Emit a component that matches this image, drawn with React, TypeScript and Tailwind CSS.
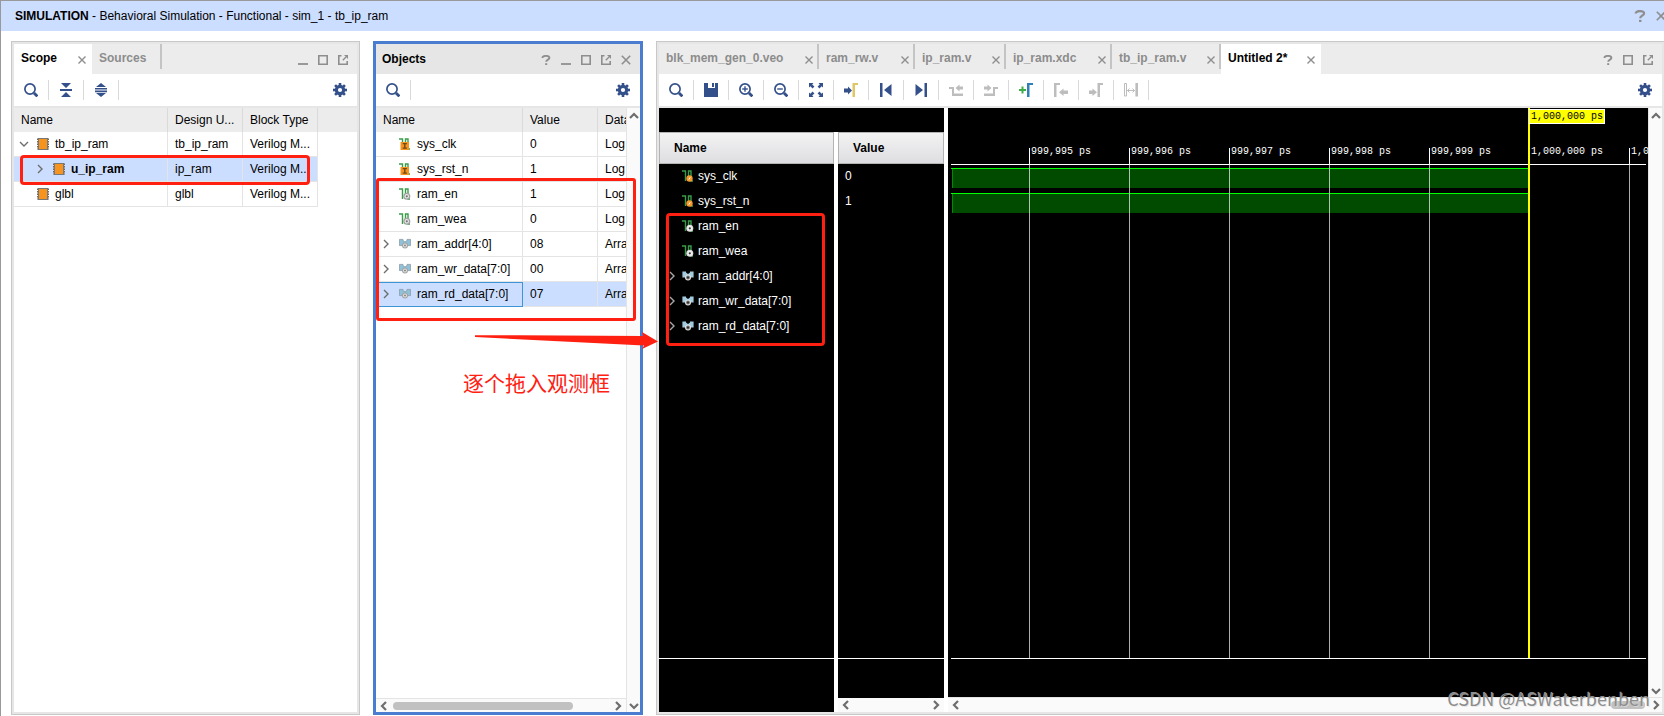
import React from "react";
import clsx from "clsx";

type IconProps = { className?: string };

/* ---------- window control icons ---------- */

const CloseIcon: React.FC<IconProps> = ({ className }) => (
  <svg width="10" height="10" viewBox="0 0 10 10" className={className} fill="none" stroke="#8e8e8e" strokeWidth="1.6">
    <path d="M.8.8l8.4 8.4M9.2.8L.8 9.2" />
  </svg>
);

const TabCloseIcon: React.FC = () => (
  <svg width="8" height="8" viewBox="0 0 8 8" fill="none" stroke="#8e8e8e" strokeWidth="1.4">
    <path d="M.5.5l7 7M7.5.5l-7 7" />
  </svg>
);

const MinIcon: React.FC = () => (
  <svg width="10" height="10" viewBox="0 0 10 10">
    <path fill="#999" d="M0 8h10v2H0z" />
  </svg>
);

const MaxIcon: React.FC = () => (
  <svg width="10" height="10" viewBox="0 0 10 10" fill="none" stroke="#8e8e8e" strokeWidth="1.6">
    <path d="M.8.8h8.4v8.4H.8z" />
  </svg>
);

const PopOutIcon: React.FC = () => (
  <svg width="10" height="10" viewBox="0 0 10 10" fill="none" stroke="#8e8e8e" strokeWidth="1.6">
    <path d="M3.500.8H.8v8.4h8.4V6" />
    <path d="M4.800 5.200L8 2" strokeWidth="1.3" />
    <path d="M6 0h4v4z" fill="#8e8e8e" stroke="none" />
  </svg>
);

const HelpIcon: React.FC<{ size?: number }> = ({ size = 10 }) => (
  <svg width={size} height={size} viewBox="0 0 10 10" fill="none" stroke="#8e8e8e" strokeWidth="1.9">
    <path d="M1.400 3C1.400 1.500 3 .9 4.800.9s3.600.6 3.600 2.100c0 1.700-3.200 1.600-3.200 3.800" />
    <path d="M4.200 8.200h2V10h-2z" fill="#8e8e8e" stroke="none" />
  </svg>
);

/* ---------- toolbar icons ---------- */

const SearchIcon: React.FC<{ sign?: "plus" | "minus" }> = ({ sign }) => (
  <svg width="14" height="14" viewBox="0 0 14 14" fill="none" stroke="#34508a" strokeWidth="1.7">
    <circle cx="6" cy="6" r="5.1" />
    <path d="M10 10l3.400 3.400" strokeWidth="2.8" />
    {sign && <path d="M3.200 6h5.600" strokeWidth="1.4" />}
    {sign === "plus" && <path d="M6 3.200v5.600" strokeWidth="1.4" />}
  </svg>
);

const GearIcon: React.FC = () => (
  <svg width="14" height="14" viewBox="0 0 14 14">
    <g fill="#34508a">
      <path d="M5.700 0h2.600v14H5.700z" />
      <path d="M0 5.700h14v2.600H0z" />
      <path d="M5.700 0h2.600v14H5.700z" transform="rotate(45 7 7)" />
      <path d="M5.700 0h2.600v14H5.700z" transform="rotate(-45 7 7)" />
      <circle cx="7" cy="7" r="5.2" />
    </g>
    <circle cx="7" cy="7" r="2.1" fill="#fff" />
  </svg>
);

const CollapseIcon: React.FC = () => (
  <svg width="12" height="14" viewBox="0 0 12 14" fill="#34508a">
    <path d="M1 0h10L6 5zM1 14h10L6 9zM0 6h12v2H0z" />
  </svg>
);

const ExpandIcon: React.FC = () => (
  <svg width="12" height="14" viewBox="0 0 12 14" fill="#34508a">
    <path d="M6 0l5 4H1zM6 14l5-4H1zM0 5h12v1.600H0zM0 7.600h12v1.600H0z" />
  </svg>
);

const SaveIcon: React.FC = () => (
  <svg width="14" height="14" viewBox="0 0 14 14" fill="#34508a">
    <path d="M0 0h4v5h7V0h3v14H0z" />
    <path d="M8 0h2v4H8z" />
  </svg>
);

const FitIcon: React.FC = () => (
  <svg width="14" height="14" viewBox="0 0 14 14" fill="#34508a">
    <path d="M0 0h4.500L3.200 1.400 5.400 3.600 3.600 5.400 1.400 3.200 0 4.500zM14 0v4.500l-1.400-1.300-2.200 2.200-1.800-1.800 2.200-2.200L9.500 0zM0 14V9.500l1.400 1.300 2.200-2.200 1.800 1.800-2.200 2.200L4.500 14zM14 14H9.500l1.300-1.400-2.200-2.200 1.800-1.800 2.200 2.200L14 9.500z" />
  </svg>
);

const CursorIcon: React.FC = () => (
  <svg width="14" height="14" viewBox="0 0 14 14">
    <path fill="#34508a" d="M0 5.500h4V3.500l4 4-4 4v-2H0z" />
    <path fill="#e0c667" d="M8.500 0H14v2h-3v12H8.500z" />
  </svg>
);

const FirstIcon: React.FC = () => (
  <svg width="14" height="14" viewBox="0 0 14 14" fill="#34508a">
    <path d="M1 0h2.500v14H1zM12.500 1v12L5 7z" />
  </svg>
);

const LastIcon: React.FC = () => (
  <svg width="14" height="14" viewBox="0 0 14 14" fill="#34508a">
    <path d="M10.500 0H13v14h-2.500zM1.500 1v12L9 7z" />
  </svg>
);

const PrevEdgeIcon: React.FC = () => (
  <svg width="14" height="14" viewBox="0 0 14 14" fill="#bdbdbd">
    <path d="M0 4h5v6.500h9V13H3V6H0zM14 3.500v3h-3.500v2L6.500 5l4-3.500v2z" />
  </svg>
);

const NextEdgeIcon: React.FC = () => (
  <svg width="14" height="14" viewBox="0 0 14 14" fill="#bdbdbd">
    <path d="M0 10.500h9V4h5v2h-3v7H0zM0 3.500h3.500v-2l4 3.500-4 3.500v-2H0z" />
  </svg>
);

const AddMarkerIcon: React.FC = () => (
  <svg width="14" height="14" viewBox="0 0 14 14">
    <path fill="#3fae49" d="M2.500 3.500h2V6H7v2H4.500v2.500h-2V8H0V6h2.500z" />
    <path fill="#2f7fb8" d="M8 0h6v2h-3.500v12H8z" />
  </svg>
);

const PrevMarkerIcon: React.FC = () => (
  <svg width="14" height="14" viewBox="0 0 14 14" fill="#bdbdbd">
    <path d="M0 0h6v2H2.500v12H0zM14 7.500v3.500H9.500v2L5 9.200l4.500-3.800v2.100z" />
  </svg>
);

const NextMarkerIcon: React.FC = () => (
  <svg width="14" height="14" viewBox="0 0 14 14" fill="#bdbdbd">
    <path d="M8.500 0H14v2h-3v12H8.500zM0 7.500h3.500V5.500L8 9.300l-4.500 3.800V11H0z" />
  </svg>
);

const SwapIcon: React.FC = () => (
  <svg width="14" height="14" viewBox="0 0 14 14" fill="none" stroke="#bdbdbd">
    <path d="M.5.500h2v12.500h-2zM3.500 7.500h7M5.500 5.500l-2 2 2 2M8.500 5.500l2 2-2 2" />
    <path d="M12.700 0v13.500" strokeWidth="2.600" />
  </svg>
);

/* ---------- tree and signal icons ---------- */

const Chevron: React.FC<{ dir: "up" | "down" | "left" | "right"; bold?: boolean; color?: string }> = ({
  dir,
  bold,
  color = "#6e6e6e",
}) => {
  const d = {
    up: "M1 7l4-4 4 4",
    down: "M1 3l4 4 4-4",
    left: "M7 1L3 5l4 4",
    right: "M3 1l4 4-4 4",
  }[dir];
  return (
    <svg width="10" height="10" viewBox="0 0 10 10" fill="none" stroke={color} strokeWidth={bold ? 2.2 : 1.4} className="shrink-0">
      <path d={d} />
    </svg>
  );
};

const ChipIcon: React.FC = () => (
  <svg width="12" height="12" viewBox="0 0 12 12" className="shrink-0">
    <path stroke="#666" strokeWidth="12" strokeDasharray="1.500 1" d="M6 .5v11" />
    <path fill="#777" d="M1 0h10v12H1z" />
    <path fill="#f7941d" d="M2 1h8v10H2z" />
  </svg>
);

type SignalKind = "port" | "net" | "bus";

const SignalIcon: React.FC<{ kind: SignalKind; dark?: boolean }> = ({ kind, dark }) => {
  if (kind === "bus") {
    return (
      <svg width="12" height="12" viewBox="0 0 12 12" className="shrink-0">
        <path
          fill={dark ? "#a3cbe0" : "#8fc1d8"}
          stroke={dark ? "none" : "#8c9ba3"}
          strokeWidth=".8"
          d="M.4 1.400H4v1.200L6 4l2-1.400V1.400h3.600v6.200H9L6 5.500 3 7.600H.4z"
        />
        <circle cx="6" cy="7.500" r="3" fill={dark ? "#e2e2e2" : "#a2a2a2"} />
        <circle cx="6" cy="7.500" r="1.900" fill={dark ? "#777" : "#e8e8e8"} />
        <circle cx="6" cy="7.500" r=".9" fill={dark ? "#222" : "#777"} />
      </svg>
    );
  }
  return (
    <svg width="12" height="12" viewBox="0 0 12 12" className="shrink-0">
      <path d="M0 1h3.500v10M6.500 8V1H9v10h2" fill="none" stroke="#3a9c4b" strokeWidth="1.400" />
      {kind === "port" && !dark && (
        <>
          <path fill="#f7941d" d="M1.500 4H10v8H1.500z" />
          <path fill="#6d4a1a" d="M3.700 5h4.200v1.200H6.500v3.400h1.400v1.200H3.700V9.600h1.400V6.200H3.700z" />
        </>
      )}
      {kind === "port" && dark && (
        <>
          <circle cx="7.500" cy="8.500" r="3.200" fill="#f79a2d" />
          <path d="M6.800 9.500l1.500-2.200" stroke="#fff" />
        </>
      )}
      {kind === "net" && (
        <>
          <circle cx="7.800" cy="8.300" r="3.500" fill={dark ? "#dedede" : "#a2a2a2"} />
          <circle cx="7.800" cy="8.300" r="2.200" fill={dark ? "#f4f4f4" : "#e8e8e8"} />
          <circle cx="7.800" cy="8.300" r="1.100" fill={dark ? "#333" : "#777"} />
        </>
      )}
    </svg>
  );
};

/* ---------- shared pieces ---------- */

const WindowButton: React.FC<{ label: string; children: React.ReactNode }> = ({ label, children }) => (
  <button type="button" aria-label={label} className="flex size-[10px] shrink-0 items-center justify-center">
    {children}
  </button>
);

const Tool: React.FC<{ label: string; children: React.ReactNode }> = ({ label, children }) => (
  <button
    type="button"
    aria-label={label}
    className="flex h-5 w-[35px] shrink-0 items-center justify-center border-r border-[#d9d9d9]"
  >
    {children}
  </button>
);

const Toolbar: React.FC<{ children: React.ReactNode }> = ({ children }) => (
  <div className="flex h-[34px] shrink-0 items-center border-b-2 border-[#e6e6e6] bg-white">
    {children}
    <button type="button" aria-label="Settings" className="mr-[10px] ml-auto">
      <GearIcon />
    </button>
  </div>
);

const Tab: React.FC<{ title: string; active?: boolean; closable?: boolean; width: string }> = ({
  title,
  active,
  closable = true,
  width,
}) => (
  <div
    className={clsx(
      "flex shrink-0 items-start justify-between font-bold",
      width,
      active ? "h-[30px] bg-white pr-[6px] text-black" : "h-[25px] border-r-2 border-[#c4c4c4] pr-1 text-[#8c8c8c]"
    )}
  >
    <button type="button" className="pt-[6px] pl-[7px] leading-4">
      {title}
    </button>
    {closable && (
      <button type="button" aria-label={`Close ${title}`} className="pt-3">
        <TabCloseIcon />
      </button>
    )}
  </div>
);

const scopeRows = [
  { name: "tb_ip_ram", unit: "tb_ip_ram", depth: 0, arrow: "down" as const },
  { name: "u_ip_ram", unit: "ip_ram", depth: 1, arrow: "right" as const, selected: true },
  { name: "glbl", unit: "glbl", depth: 0 },
];

const signals: { name: string; value: string; type: string; kind: SignalKind }[] = [
  { name: "sys_clk", value: "0", type: "Log", kind: "port" },
  { name: "sys_rst_n", value: "1", type: "Log", kind: "port" },
  { name: "ram_en", value: "1", type: "Log", kind: "net" },
  { name: "ram_wea", value: "0", type: "Log", kind: "net" },
  { name: "ram_addr[4:0]", value: "08", type: "Arra", kind: "bus" },
  { name: "ram_wr_data[7:0]", value: "00", type: "Arra", kind: "bus" },
  { name: "ram_rd_data[7:0]", value: "07", type: "Arra", kind: "bus" },
];

const th = "h-6 border-r border-[#dadada] bg-[#ececec] pl-[7px] text-left font-normal whitespace-nowrap";
const td = "h-[25px] border-r border-b border-[#e4e4e4] whitespace-nowrap";

/* ---------- panels ---------- */

const ScopePanel: React.FC = () => (
  <section className="relative flex w-[349px] shrink-0 flex-col border border-[#c8c8c8] bg-white">
    <div className="flex flex-1 flex-col border-2 border-[#e6e6e6]">
      <div className="flex h-[30px] shrink-0 bg-[#ececec]">
        <Tab title="Scope" active width="w-[78px]" />
        <Tab title="Sources" closable={false} width="w-[70px]" />
        <div className="mr-[9px] ml-auto flex items-center gap-[10px] pt-px">
          <WindowButton label="Minimize"><MinIcon /></WindowButton>
          <WindowButton label="Maximize"><MaxIcon /></WindowButton>
          <WindowButton label="Float"><PopOutIcon /></WindowButton>
        </div>
      </div>
      <Toolbar>
        <Tool label="Search"><SearchIcon /></Tool>
        <Tool label="Collapse all"><CollapseIcon /></Tool>
        <Tool label="Expand all"><ExpandIcon /></Tool>
      </Toolbar>
      <div className="bg-[linear-gradient(#ececec_24px,transparent_24px)]">
        <table className="w-[304px] table-fixed border-separate border-spacing-0">
          <thead>
            <tr>
              <th className={clsx(th, "w-[154px]")}>Name</th>
              <th className={clsx(th, "w-[75px]")}>Design U...</th>
              <th className={clsx(th, "w-[75px]")}>Block Type</th>
            </tr>
          </thead>
          <tbody>
            {scopeRows.map(({ name, unit, depth, arrow, selected }) => (
              <tr key={name} className={clsx(selected && "bg-[#ccdeff]")}>
                <td className={clsx(td, "pl-[5px]")}>
                  <div className={clsx("flex items-center", depth > 0 && "pl-4", selected && "font-bold")}>
                    {arrow ? <Chevron dir={arrow} /> : <span className="w-[10px]" />}
                    <span className="mr-[6px] ml-2"><ChipIcon /></span>
                    {name}
                  </div>
                </td>
                <td className={clsx(td, "pl-[7px]")}>{unit}</td>
                <td className={clsx(td, "pl-[7px]")}>Verilog M...</td>
              </tr>
            ))}
          </tbody>
        </table>
      </div>
    </div>
    {/* highlight around the selected instance */}
    <div className="absolute top-[113px] left-2 h-[30px] w-[290px] rounded-[4px] border-3 border-[#ff2012]" />
  </section>
);

const ObjectsPanel: React.FC = () => (
  <section className="relative flex w-[270px] shrink-0 flex-col border-3 border-[#4a7dcf] bg-white">
    <div className="flex h-[30px] shrink-0 items-center bg-[#e6e6e6] pl-[6px]">
      <h2 className="pb-px font-bold">Objects</h2>
      <div className="mr-[9px] ml-auto flex items-center gap-[10px] pt-px">
        <WindowButton label="Help"><HelpIcon /></WindowButton>
        <WindowButton label="Minimize"><MinIcon /></WindowButton>
        <WindowButton label="Maximize"><MaxIcon /></WindowButton>
        <WindowButton label="Float"><PopOutIcon /></WindowButton>
        <WindowButton label="Close"><CloseIcon /></WindowButton>
      </div>
    </div>
    <Toolbar>
      <Tool label="Search"><SearchIcon /></Tool>
    </Toolbar>
    <div className="flex flex-1">
      <div className="flex min-w-0 flex-1 flex-col">
        <table className="w-full table-fixed border-separate border-spacing-0">
          <thead>
            <tr>
              <th className={clsx(th, "w-[147px]")}>Name</th>
              <th className={clsx(th, "w-[75px]")}>Value</th>
              <th className={clsx(th, "overflow-hidden border-r-0")}>Data</th>
            </tr>
          </thead>
          <tbody>
            {signals.map(({ name, value, type, kind }, i) => {
              const selected = i === signals.length - 1;
              return (
                <tr key={name} className={clsx(selected && "bg-[#ccdeff]")}>
                  <td className={clsx(td, "pl-[5px]", selected && "outline -outline-offset-1 outline-[#3d95d6]")}>
                    <div className="flex items-center">
                      {kind === "bus" ? <Chevron dir="right" /> : <span className="w-[10px]" />}
                      <span className="mr-[6px] ml-2"><SignalIcon kind={kind} /></span>
                      {name}
                    </div>
                  </td>
                  <td className={clsx(td, "pl-[7px]")}>{value}</td>
                  <td className={clsx(td, "border-r-0 pl-[7px]")}>{type}</td>
                </tr>
              );
            })}
          </tbody>
        </table>
        <div className="mt-auto flex h-[14px] items-center border-t border-[#e4e4e4] bg-[#fafafa] px-[3px]">
          <Chevron dir="left" bold />
          <div className="ml-1 h-2 w-[180px] rounded-full bg-[#c1c1c1]" />
          <span className="ml-auto flex"><Chevron dir="right" bold /></span>
        </div>
      </div>
      <div className="flex w-[14px] shrink-0 flex-col items-center justify-between border-l border-[#e4e4e4] bg-[#fafafa] pt-[3px] pb-px">
        <Chevron dir="up" bold />
        <Chevron dir="down" bold />
      </div>
    </div>
    {/* highlight around the internal signals */}
    <div className="absolute top-[134px] left-0 h-[143px] w-[260px] rounded-[3px] border-3 border-[#ff2012]" />
    <svg width="184" height="18" viewBox="0 0 184 18" className="absolute top-[288px] left-[98px] z-10">
      <path fill="#ff2012" d="M1 3.200h43L169 4l-1-4 16 9.500L168 17l2-3.500L1 5z" />
    </svg>
    <p className="absolute top-[322px] left-[87px] font-['Noto_Sans_CJK_SC',sans-serif] text-[21px] leading-8 whitespace-nowrap text-[#ff2012]">
      逐个拖入观测框
    </p>
  </section>
);

const waveTabs = [
  { title: "blk_mem_gen_0.veo", width: "w-[160px]" },
  { title: "ram_rw.v", width: "w-[96px]" },
  { title: "ip_ram.v", width: "w-[91px]" },
  { title: "ip_ram.xdc", width: "w-[106px]" },
  { title: "tb_ip_ram.v", width: "w-[109px]" },
];

const waveTools = [
  { label: "Search", icon: <SearchIcon /> },
  { label: "Save", icon: <SaveIcon /> },
  { label: "Zoom in", icon: <SearchIcon sign="plus" /> },
  { label: "Zoom out", icon: <SearchIcon sign="minus" /> },
  { label: "Zoom fit", icon: <FitIcon /> },
  { label: "Go to cursor", icon: <CursorIcon /> },
  { label: "Go to start", icon: <FirstIcon /> },
  { label: "Go to end", icon: <LastIcon /> },
  { label: "Previous transition", icon: <PrevEdgeIcon /> },
  { label: "Next transition", icon: <NextEdgeIcon /> },
  { label: "Add marker", icon: <AddMarkerIcon /> },
  { label: "Previous marker", icon: <PrevMarkerIcon /> },
  { label: "Next marker", icon: <NextMarkerIcon /> },
  { label: "Swap cursors", icon: <SwapIcon /> },
];

const ticks = [
  { x: 81, label: "999,995 ps" },
  { x: 181, label: "999,996 ps" },
  { x: 281, label: "999,997 ps" },
  { x: 381, label: "999,998 ps" },
  { x: 481, label: "999,999 ps" },
  { x: 581, label: "1,000,000 ps" },
  { x: 681, label: "1,0" },
];

const waveHeader =
  "flex h-8 shrink-0 items-center border border-[#b4b4b4] bg-linear-to-b from-[#f3f3f3] to-[#dedee2] pl-[14px] font-bold";

const Waveform: React.FC = () => (
  <svg width="100%" height="100%" className="absolute inset-0" shapeRendering="crispEdges">
    {[60, 85].map((y) => (
      <g key={y}>
        <rect x="4" y={y} width="576" height="20" fill="#004b00" />
        <rect x="4" y={y} width="1" height="20" fill="#008a00" />
        <rect x="3" y={y} width="577" height="1" fill="#00ff00" />
      </g>
    ))}
    {ticks.map(({ x, label }) => (
      <g key={x}>
        <rect x={x} y="57" width="1" height="100%" fill="#fff" opacity=".68" />
        <rect x={x} y="40" width="1" height="17" fill="#fff" />
        <text x={x + 2} y="46" fill="#fff" className="font-['Liberation_Mono',monospace] text-[10px]">
          {label}
        </text>
      </g>
    ))}
    <rect x="3" y="56" width="695" height="1" fill="#fff" />
    {/* main cursor */}
    <rect x="580" y="0" width="2" height="100%" fill="#ff0" />
    <rect x="581" y="1" width="75" height="14" fill="#ff0" stroke="#fff" />
    <text x="583" y="11" fill="#000" className="font-['Liberation_Mono',monospace] text-[10px]">
      1,000,000 ps
    </text>
  </svg>
);

const WavePanel: React.FC = () => (
  <section className="relative flex min-w-0 flex-1 flex-col border border-r-0 border-[#c8c8c8] bg-white">
    <div className="flex flex-1 flex-col border-2 border-[#e6e6e6]">
      <div className="flex h-[30px] shrink-0 bg-[#ececec]">
        {waveTabs.map((tab) => (
          <Tab key={tab.title} {...tab} />
        ))}
        <Tab title="Untitled 2*" active width="w-[100px]" />
        <div className="mr-[9px] ml-auto flex items-center gap-[10px] pt-px">
          <WindowButton label="Help"><HelpIcon /></WindowButton>
          <WindowButton label="Maximize"><MaxIcon /></WindowButton>
          <WindowButton label="Float"><PopOutIcon /></WindowButton>
        </div>
      </div>
      <Toolbar>
        {waveTools.map(({ label, icon }) => (
          <Tool key={label} label={label}>{icon}</Tool>
        ))}
      </Toolbar>
      <div className="flex flex-1">
        {/* names and values */}
        <div className="flex w-[285px] shrink-0 flex-col">
          <div className="h-6 bg-black" />
          <div className="flex flex-1 gap-1 text-white">
            <div className="flex w-[175px] flex-col bg-black">
              <div className={clsx(waveHeader, "text-black")}>Name</div>
              <ul className="flex-1 border-b border-white">
                {signals.map(({ name, kind }) => (
                  <li key={name} className="flex h-[25px] items-center pb-px pl-2">
                    {kind === "bus" ? <Chevron dir="right" color="#a8a8a8" /> : <span className="w-[10px]" />}
                    <span className="mr-1 ml-[5px]"><SignalIcon kind={kind} dark /></span>
                    {name}
                  </li>
                ))}
              </ul>
              <div className="h-[53px]" />
            </div>
            <div className="flex flex-1 flex-col bg-black">
              <div className={clsx(waveHeader, "text-black")}>Value</div>
              <ul className="flex-1 border-b border-white">
                {signals.slice(0, 2).map(({ name, value }) => (
                  <li key={name} className="flex h-[25px] items-center pb-px pl-[7px]">{value}</li>
                ))}
              </ul>
              <div className="h-[39px]" />
              <div className="flex h-[14px] items-center justify-between bg-[#fafafa] px-[3px]">
                <Chevron dir="left" bold />
                <Chevron dir="right" bold />
              </div>
            </div>
          </div>
        </div>
        {/* waveform canvas */}
        <div className="ml-1 flex min-w-0 flex-1 flex-col">
          <div className="flex flex-1">
            <div className="flex min-w-0 flex-1 flex-col bg-black">
              <div className="relative flex-1 overflow-hidden">
                <Waveform />
              </div>
              <div className="mr-[2px] ml-[3px] h-[39px] border-t border-white" />
            </div>
            <div className="flex w-[14px] shrink-0 flex-col items-center justify-between border-l border-[#e4e4e4] bg-[#fafafa] pt-[3px] pb-px">
              <Chevron dir="up" bold />
              <Chevron dir="down" bold />
            </div>
          </div>
          <div className="flex h-[15px] items-center border-t border-[#e4e4e4] bg-[#fafafa] pr-px pl-[3px]">
            <Chevron dir="left" bold />
            <div className="mr-[6px] ml-auto h-2 w-[34px] rounded-full bg-[#c1c1c1]" />
            <Chevron dir="right" bold />
          </div>
        </div>
      </div>
    </div>
    {/* highlight around the added signals */}
    <div className="absolute top-[171px] left-[9px] h-[133px] w-[159px] rounded-[4px] border-3 border-[#ff2012]" />
    <p className="absolute right-[14px] bottom-1 font-['Noto_Sans_CJK_SC',sans-serif] text-[18px] leading-6 whitespace-nowrap text-[#8c8c8c] [text-shadow:1px_1px_0_#e0e0e0aa]">
      CSDN @ASWaterbenben
    </p>
  </section>
);

const App: React.FC = () => {
  return (
    <div className="flex min-h-screen flex-col overflow-hidden border-t border-l border-[#999] bg-white font-['Liberation_Sans',Arial,sans-serif] text-[12px] leading-4 text-black">
      <header className="flex h-[30px] shrink-0 items-center bg-[#ccdeff] pl-[14px]">
        <h1>
          <strong>SIMULATION</strong> - Behavioral Simulation - Functional - sim_1 - tb_ip_ram
        </h1>
        <div className="-mr-[2px] ml-auto flex items-center gap-[10px]">
          <button type="button" aria-label="Help"><HelpIcon size={12} /></button>
          <button type="button" aria-label="Close"><CloseIcon /></button>
        </div>
      </header>
      <main className="flex flex-1 gap-[13px] pt-[10px] pb-px pl-[10px]">
        <ScopePanel />
        <ObjectsPanel />
        <WavePanel />
      </main>
    </div>
  );
};

export default App;
